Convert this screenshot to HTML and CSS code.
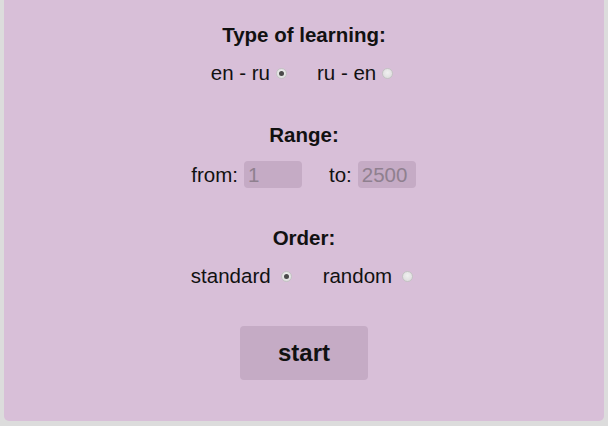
FILE: index.html
```html
<!DOCTYPE html>
<html>
<head>
<meta charset="utf-8">
<link rel="stylesheet" href="styles.css">
</head>
<body>
<div class="panel">
  <section class="group">
    <h3 class="title">Type of learning:</h3>
    <div class="row choice">
      <label class="opt">en - ru<input type="radio" name="type" class="radio r-tight" checked></label>
      <label class="opt">ru - en<input type="radio" name="type" class="radio r-tight"></label>
    </div>
  </section>
  <section class="group">
    <h3 class="title">Range:</h3>
    <div class="row range">
      <label class="opt">from:<input type="text" class="num" value="1"></label>
      <label class="opt">to:<input type="text" class="num" value="2500"></label>
    </div>
  </section>
  <section class="group">
    <h3 class="title">Order:</h3>
    <div class="row choice order">
      <label class="opt">standard<input type="radio" name="order" class="radio r-wide" checked></label>
      <label class="opt">random<input type="radio" name="order" class="radio r-wide"></label>
    </div>
  </section>
  <button class="start">start</button>
</div>
</body>
</html>
```
FILE: styles.css
```css
html, body {
  margin: 0;
  padding: 0;
  background: #dcdcdc;
  height: 426px;
  overflow: hidden;
}
body {
  font-family: "Liberation Sans", Arial, sans-serif;
  color: #111;
}
.panel {
  margin: 0 4px;
  height: 421px;
  background: #d8bfd8;
  border-radius: 0 0 5px 5px;
  box-sizing: border-box;
  padding-top: 23px;
  display: flex;
  flex-direction: column;
  align-items: center;
}
.group {
  display: flex;
  flex-direction: column;
  align-items: center;
  gap: 14px;
  margin-bottom: 38px;
}
.title {
  margin: 0;
  font-size: 20.5px;
  font-weight: bold;
  line-height: 24px;
}
.row {
  display: flex;
  align-items: center;
  gap: 30px;
  font-size: 20.5px;
  line-height: 24px;
}
.choice {
  margin-right: 4px;
}
.order {
  gap: 31px;
}
.range {
  gap: 27px;
  margin-right: 1px;
}
.opt {
  display: flex;
  align-items: center;
}
.radio {
  appearance: none;
  -webkit-appearance: none;
  width: 11px;
  height: 11px;
  margin: 0;
  border-radius: 50%;
  border: 1px solid #c4c4c4;
  background: radial-gradient(circle at 50% 40%, #f0f0f0, #dadada);
  box-sizing: border-box;
  position: relative;
}
.radio:checked::after {
  content: "";
  position: absolute;
  left: 2px;
  top: 2px;
  width: 5px;
  height: 5px;
  border-radius: 50%;
  background: #4a4a4a;
}
.r-tight {
  margin-left: 6px;
}
.r-wide {
  margin-left: 10px;
}
.num {
  margin-left: 6px;
  width: 58px;
  height: 27px;
  box-sizing: border-box;
  border: none;
  border-radius: 4px;
  background: #c5abc5;
  color: #8f808f;
  font-family: "Liberation Sans", Arial, sans-serif;
  font-size: 20.5px;
  padding: 0 0 0 4px;
  outline: none;
}
.start {
  width: 128px;
  height: 54px;
  border: none;
  border-radius: 4px;
  background: #c5abc5;
  font-family: "Liberation Sans", Arial, sans-serif;
  font-size: 24px;
  font-weight: bold;
  color: #111;
  padding: 0;
  margin-top: 0;
}
```
